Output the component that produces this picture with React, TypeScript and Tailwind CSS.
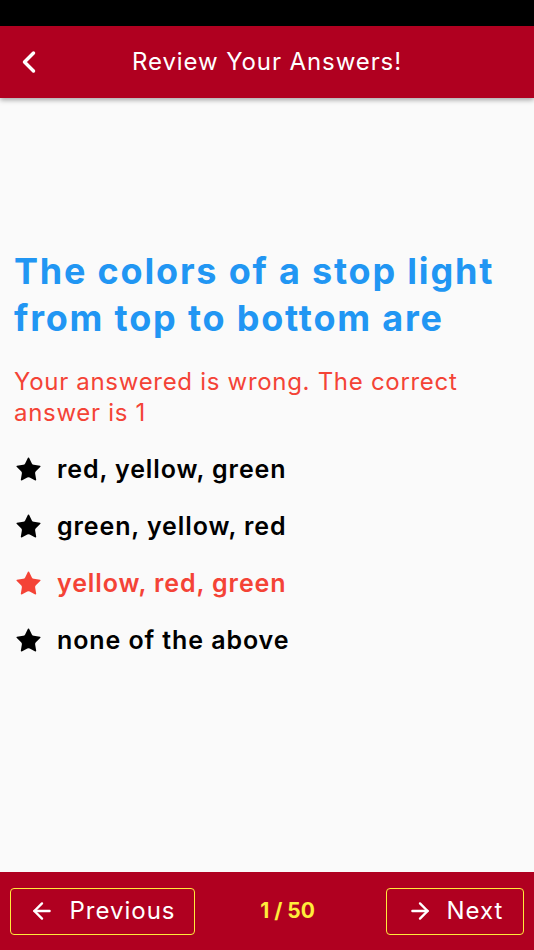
import { ChevronLeft, ArrowLeft, ArrowRight, Star } from "lucide-react";

const options = [
  { label: "red, yellow, green", selected: false },
  { label: "green, yellow, red", selected: false },
  { label: "yellow, red, green", selected: true },
  { label: "none of the above", selected: false },
];

export default function App() {
  return (
    <div className="h-[950px] w-full flex flex-col bg-[#fafafa] font-['Inter',sans-serif] overflow-hidden">
      {/* status bar */}
      <div className="h-[26px] bg-black shrink-0" />

      {/* app bar */}
      <header className="h-[72px] shrink-0 bg-[#b00020] flex items-center relative shadow-[0_2px_5px_rgba(0,0,0,0.35)] z-10">
        <button className="absolute left-[11px] text-white">
          <ChevronLeft size={36} strokeWidth={2.3} />
        </button>
        <h1 className="w-full text-center text-white text-[24px] tracking-[0.9px]">Review Your Answers!</h1>
      </header>

      {/* question */}
      <main className="flex-1 px-[14px] pt-[150px]">
        <h2 className="text-[#2196f3] font-bold text-[36px] leading-[47px] tracking-[1.8px]">
          The colors of a stop light from top to bottom are
        </h2>
        <p className="mt-[24px] text-[#f44336] text-[24px] leading-[31px] tracking-[0.7px]">
          Your answered is wrong. The correct answer is 1
        </p>
        <ul className="mt-[13px]">
          {options.map((o) => (
            <li
              key={o.label}
              className={`h-[57px] flex items-center gap-[14px] ${o.selected ? "text-[#f44336]" : "text-black"}`}
            >
              <Star size={29} fill="currentColor" strokeWidth={0} />
              <span className="font-semibold text-[25px] tracking-[0.9px]">{o.label}</span>
            </li>
          ))}
        </ul>
      </main>

      {/* bottom navigation */}
      <footer className="h-[78px] shrink-0 bg-[#b00020] flex items-center justify-between px-[10px]">
        <button className="w-[185px] h-[47px] border-[1.5px] border-[#ffeb3b] rounded-[4px] flex items-center justify-center gap-[14px] text-white text-[24px] tracking-[1px]">
          <ArrowLeft size={26} strokeWidth={2.2} />
          Previous
        </button>
        <span className="text-[#ffeb3b] font-bold text-[21px] -ml-[6px]">1 / 50</span>
        <button className="w-[138px] h-[47px] border-[1.5px] border-[#ffeb3b] rounded-[4px] flex items-center justify-center gap-[14px] text-white text-[24px] tracking-[1px]">
          <ArrowRight size={26} strokeWidth={2.2} />
          Next
        </button>
      </footer>
    </div>
  );
}
